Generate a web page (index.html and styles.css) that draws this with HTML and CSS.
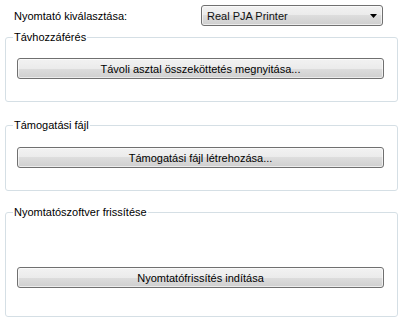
FILE: index.html
```html
<!DOCTYPE html>
<html lang="hu">
  <head>
    <meta charset="UTF-8" />
    <meta name="viewport" content="width=device-width, initial-scale=1.0" />
    <title>Nyomtató</title>
    <link rel="stylesheet" href="styles.css">
  </head>
  <body>
    <div class="sor">
      <span class="cimke">Nyomtató kiválasztása:</span>
      <div class="lista">
        <span>Real PJA Printer</span>
        <svg class="nyil" width="7" height="4" viewBox="0 0 7 4">
          <polygon points="0,0 7,0 3.5,4" fill="#000" />
        </svg>
      </div>
    </div>

    <fieldset class="csoport elso">
      <legend>Távhozzáférés</legend>
      <button class="gomb">Távoli asztal összeköttetés megnyitása...</button>
    </fieldset>

    <fieldset class="csoport masodik">
      <legend>Támogatási fájl</legend>
      <button class="gomb">Támogatási fájl létrehozása...</button>
    </fieldset>

    <fieldset class="csoport harmadik">
      <legend>Nyomtatószoftver frissítése</legend>
      <button class="gomb">Nyomtatófrissítés indítása</button>
    </fieldset>
  </body>
</html>
```

FILE: styles.css
```css
body {
  margin: 0;
  background-color: #ffffff;
  font-family: "Liberation Sans", Arial, sans-serif;
  font-size: 11px;
  color: #000;
}

.sor {
  display: flex;
  justify-content: space-between;
  align-items: center;
  padding: 5px 25px 0 14px;
  height: 21px;
}

.lista {
  width: 182px;
  height: 21px;
  box-sizing: border-box;
  border: 1px solid #707070;
  border-radius: 3px;
  background: linear-gradient(#f2f2f2 0%, #ebebeb 50%, #dddddd 50%, #cfcfcf 100%);
  box-shadow: inset 0 0 0 1px rgba(255, 255, 255, 0.6);
  display: flex;
  align-items: center;
  justify-content: space-between;
  padding: 0 5px 0 5px;
  color: #111;
}

.nyil {
  display: block;
}

.csoport {
  margin: 0 10px 0 5px;
  padding: 0;
  border: 1px solid #d5dfe5;
  border-radius: 3px;
}

.csoport legend {
  margin-left: 7px;
  padding: 0 1px;
  line-height: 13px;
}

.elso {
  margin-top: 5px;
  padding-bottom: 22px;
}

.masodik {
  margin-top: 17px;
  padding-bottom: 22px;
}

.harmadik {
  margin-top: 15px;
  padding-bottom: 28px;
}

.gomb {
  display: block;
  width: 367px;
  height: 21px;
  margin: 14px 0 0 11px;
  border: 1px solid #707070;
  border-radius: 3px;
  background: linear-gradient(#f2f2f2 0%, #ebebeb 50%, #dddddd 50%, #cfcfcf 100%);
  box-shadow: inset 0 0 0 1px rgba(255, 255, 255, 0.6);
  font-family: inherit;
  font-size: 11px;
  color: #000;
  padding: 0;
}

.masodik .gomb {
  margin-top: 15px;
}

.harmadik .gomb {
  margin-top: 48px;
}
```
